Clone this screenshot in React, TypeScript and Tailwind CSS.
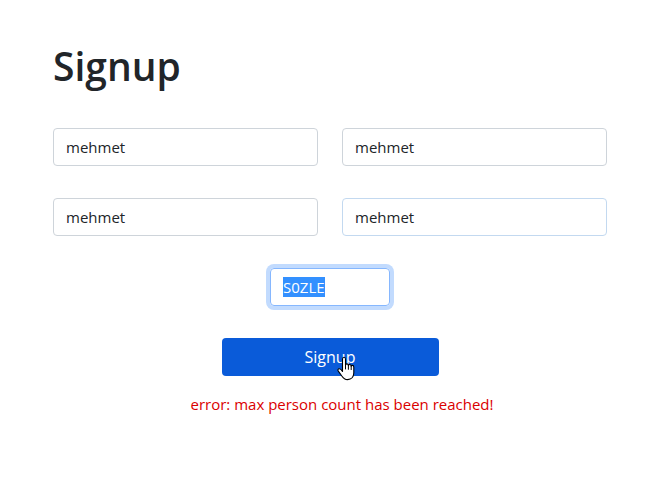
import { useEffect, useRef } from "react";

const fields = [
  { id: "first-name", label: "First name" },
  { id: "last-name", label: "Last name" },
  { id: "username", label: "Username" },
  { id: "nickname", label: "Nickname", tint: true },
];

function HandCursor() {
  return (
    <svg
      className="pointer-events-none absolute top-[18px] left-[115px] h-[25px] w-[18px]"
      viewBox="0 0 18 25"
      aria-hidden="true"
    >
      <path
        d="M5.5 15.5V3.2C5.5 1.9 6.1 1.2 7 1.2S8.5 1.9 8.5 3.2V9.2C8.6 8.3 9.2 7.9 9.9 7.9S11.3 8.4 11.4 9.5C11.6 8.8 12.1 8.5 12.7 8.5S14.1 9 14.2 10.1C14.4 9.6 14.8 9.4 15.4 9.4S16.8 10 16.8 11.2V16.8C16.8 20.6 14.4 23.6 10.6 23.6C7.7 23.6 6.3 22.3 5 20.2L1.3 15.1C.6 14 1 13 1.9 12.8C3.2 12.5 4.4 13.8 5.5 15.5Z"
        fill="white"
        stroke="black"
        strokeWidth="1.1"
        strokeLinejoin="round"
      />
      <path d="M8.5 9V13M11.4 9.5V13.3M14.2 10.1V13.6" stroke="black" strokeWidth="1" strokeLinecap="round" />
    </svg>
  );
}

export default function App() {
  const captcha = useRef<HTMLInputElement>(null);

  useEffect(() => {
    captcha.current?.focus();
    captcha.current?.select();
  }, []);

  return (
    <main className="min-h-screen bg-white pt-10 pr-[55px] pl-[53px] font-['Open_Sans','Noto_Sans',sans-serif] text-[15px] leading-6 text-[#212529]">
      <h1 className="mb-9 text-[39px] leading-[52px] font-semibold">Signup</h1>
      <form className="flex flex-col items-center gap-8" onSubmit={(e) => e.preventDefault()}>
        <div className="grid w-full grid-cols-2 gap-x-6 gap-y-8">
          {fields.map((field) => (
            <input
              key={field.id}
              id={field.id}
              aria-label={field.label}
              type="text"
              defaultValue="mehmet"
              className={`h-[38px] w-full rounded border px-3 outline-none ${
                field.tint ? "border-[#c3d9f0]" : "border-[#ced4da]"
              }`}
            />
          ))}
        </div>
        <input
          ref={captcha}
          aria-label="Captcha"
          type="text"
          defaultValue="S0ZLE"
          className="h-[38px] w-[120px] rounded border border-[#86b7fe] px-3 ring-4 ring-[#c2dbfe] outline-none selection:bg-[#3390ff] selection:text-white"
        />
        <div className="relative w-[217px]">
          <button type="submit" className="h-[38px] w-full cursor-pointer rounded bg-[#0a5bd9] text-base text-white">
            Signup
          </button>
          <HandCursor />
        </div>
      </form>
      <p role="alert" className="mt-4 pl-6 text-center text-[#da0000]">
        error: max person count has been reached!
      </p>
    </main>
  );
}
